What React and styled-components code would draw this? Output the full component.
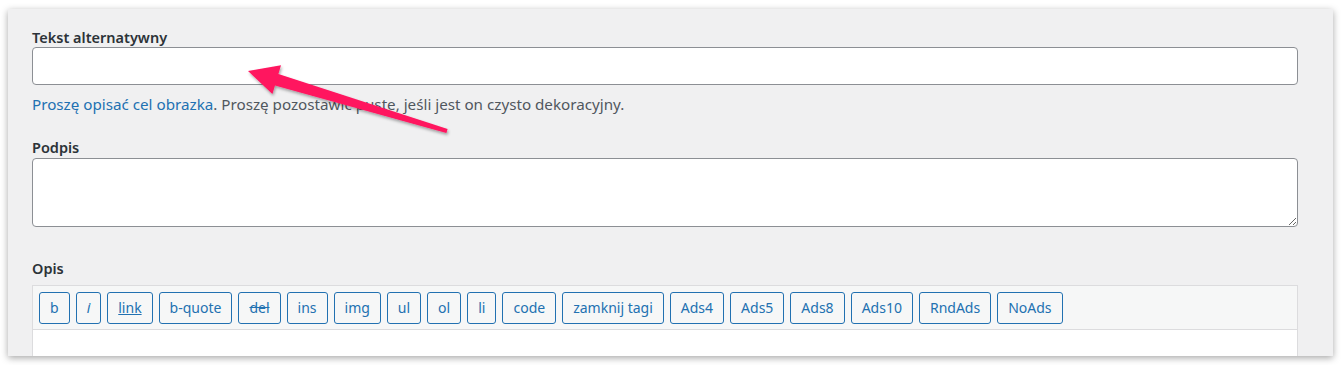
import styled, { createGlobalStyle } from "styled-components";

const GlobalStyle = createGlobalStyle`
  html, body {
    margin: 0;
    background: #ffffff;
  }
  body {
    font-family: "Noto Sans", "Liberation Sans", sans-serif;
  }
`;

const buttons = [
  { label: "b" },
  { label: "i", italic: true },
  { label: "link", underline: true },
  { label: "b-quote" },
  { label: "del", strike: true },
  { label: "ins" },
  { label: "img" },
  { label: "ul" },
  { label: "ol" },
  { label: "li" },
  { label: "code" },
  { label: "zamknij tagi" },
  { label: "Ads4" },
  { label: "Ads5" },
  { label: "Ads8" },
  { label: "Ads10" },
  { label: "RndAds" },
  { label: "NoAds" },
];

const App = () => {
  return (
    <>
      <GlobalStyle />
      <Page>
        <Panel>
          <Field $after={25}>
            <Label>Tekst alternatywny</Label>
            <TextInput type="text" />
            <Help>
              <a href="#alt">Proszę opisać cel obrazka</a>. Proszę pozostawić puste, jeśli jest on czysto dekoracyjny.
            </Help>
          </Field>
          <Field $after={32}>
            <Label>Podpis</Label>
            <TextArea />
          </Field>
          <Field>
            <Label>Opis</Label>
            <Editor>
              <Toolbar>
                {buttons.map((b) => (
                  <TagButton
                    key={b.label}
                    $italic={b.italic}
                    $underline={b.underline}
                    $strike={b.strike}
                  >
                    {b.label}
                  </TagButton>
                ))}
              </Toolbar>
              <EditorBody />
            </Editor>
          </Field>
          <Arrow viewBox="0 0 1325 347" aria-hidden="true">
            <defs>
              <filter id="arrowShadow" x="-20%" y="-20%" width="140%" height="140%">
                <feDropShadow dx="1" dy="2" stdDeviation="1.5" floodColor="#000" floodOpacity="0.35" />
              </filter>
            </defs>
            {/* coordinates relative to the panel (page minus 8,9) */}
            <polygon
              filter="url(#arrowShadow)"
              fill="#ff145f"
              points="240,62 273,56.3 270.4,65 439.6,120.1 438.4,123.9 267,76.4 264.4,85"
            />
          </Arrow>
        </Panel>
      </Page>
    </>
  );
};

const Page = styled.div`
  padding: 9px 10px 9px 8px;
`;

const Panel = styled.div`
  position: relative;
  height: 347px;
  overflow: hidden;
  background: #f0f0f1;
  box-shadow: 0 2px 7px rgba(0, 0, 0, 0.35);
  padding: 19px 35px 0 24px;
  box-sizing: border-box;
  display: flex;
  flex-direction: column;
`;

const Field = styled.div`
  display: flex;
  flex-direction: column;
  margin-bottom: ${(p) => p.$after || 0}px;
`;

const Label = styled.label`
  font-size: 14.5px;
  line-height: 18px;
  font-weight: 600;
  color: #2c3338;
  margin-bottom: 1px;
`;

const TextInput = styled.input`
  box-sizing: border-box;
  height: 38px;
  width: 100%;
  margin: 0;
  border: 1px solid #8c8f94;
  border-radius: 4px;
  background: #fff;
  font: inherit;
`;

const Help = styled.p`
  margin: 10px 0 0;
  font-size: 15.2px;
  line-height: 18px;
  color: #50575e;

  a {
    color: #2271b1;
    text-decoration: none;
  }
`;

const TextArea = styled.textarea`
  box-sizing: border-box;
  display: block;
  height: 69px;
  width: 100%;
  margin: 1px 0 0;
  border: 1px solid #8c8f94;
  border-radius: 4px;
  background: #fff;
  font: inherit;
`;

const Editor = styled.div`
  margin-top: 7px;
  border: 1px solid #dcdcde;
  background: #fff;
`;

const Toolbar = styled.div`
  display: flex;
  flex-wrap: wrap;
  gap: 6px;
  padding: 6px 6px 5px;
  background: #f6f7f7;
  border-bottom: 1px solid #dcdcde;
`;

const TagButton = styled.button`
  box-sizing: border-box;
  height: 32px;
  min-width: 24px;
  padding: 0 10px;
  margin: 0;
  border: 1px solid #2271b1;
  border-radius: 3px;
  background: #f6f7f7;
  color: #2271b1;
  font-family: "Noto Sans", "Liberation Sans", sans-serif;
  font-size: 14px;
  line-height: 30px;
  font-weight: 400;
  font-style: ${(p) => (p.$italic ? "italic" : "normal")};
  text-decoration: ${(p) =>
    p.$underline ? "underline" : p.$strike ? "line-through" : "none"};
`;

const EditorBody = styled.div`
  height: 60px;
  background: #fff;
`;

const Arrow = styled.svg`
  position: absolute;
  left: 0;
  top: 0;
  width: 1325px;
  height: 347px;
  pointer-events: none;
`;

export default App;
